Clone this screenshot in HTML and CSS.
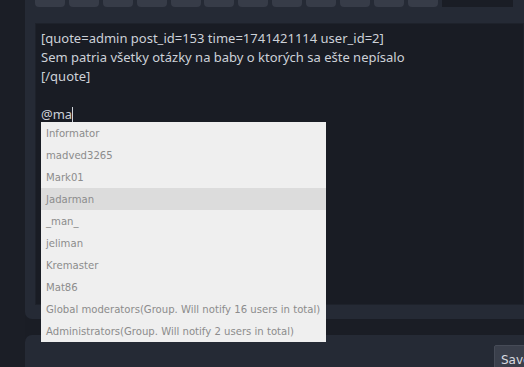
FILE: index.html
```html
<!DOCTYPE html>
<html lang="en">
<head>
    <meta charset="UTF-8">
    <meta name="viewport" content="width=device-width, initial-scale=1.0">
    <title>Post reply</title>
    <link rel="stylesheet" href="styles.css">
</head>
<body>
    <div class="page">
        <div class="sidebar"></div>
        <div class="main">
            <div class="editor-panel">
                <div class="toolbar">
                    <span class="tool-btn"></span>
                    <span class="tool-btn"></span>
                    <span class="tool-btn"></span>
                    <span class="tool-btn"></span>
                    <span class="tool-btn"></span>
                    <span class="tool-btn"></span>
                    <span class="tool-btn"></span>
                    <span class="tool-btn"></span>
                    <span class="tool-btn"></span>
                    <span class="tool-btn"></span>
                    <span class="tool-btn"></span>
                    <span class="tool-btn"></span>
                    <span class="tool-select"></span>
                </div>

                <div class="message-box">
                    <div class="message-text">
                        <div>[quote=admin post_id=153 time=1741421114 user_id=2]</div>
                        <div>Sem patria všetky otázky na baby o ktorých sa ešte nepísalo</div>
                        <div>[/quote]</div>
                        <div>&nbsp;</div>
                        <div>@ma<span class="caret"></span></div>
                    </div>

                    <!-- mention autocomplete -->
                    <ul class="mention-list">
                        <li>Informator</li>
                        <li>madved3265</li>
                        <li>Mark01</li>
                        <li class="selected">Jadarman</li>
                        <li>_man_</li>
                        <li>jeliman</li>
                        <li>Kremaster</li>
                        <li>Mat86</li>
                        <li>Global moderators(Group. Will notify 16 users in total)</li>
                        <li>Administrators(Group. Will notify 2 users in total)</li>
                    </ul>
                </div>
            </div>

            <div class="submit-panel">
                <button class="save-btn">Save</button>
            </div>
        </div>
    </div>
</body>
</html>
```

FILE: styles.css
```css
* {
    margin: 0;
    padding: 0;
    box-sizing: border-box;
}

html, body {
    height: 100%;
    overflow: hidden;
}

body {
    background: #1a1d25;
    font-family: 'Noto Sans', 'Open Sans', sans-serif;
}

.page {
    display: flex;
    height: 100%;
}

.sidebar {
    width: 25px;
    flex-shrink: 0;
    background: #1b1e26;
}

.main {
    flex: 1;
    display: flex;
    flex-direction: column;
    min-width: 0;
}

.editor-panel {
    flex-shrink: 0;
    background: #252a35;
    border-radius: 0 0 0 7px;
    padding: 0 0 14px 10px;
    height: 319px;
    display: flex;
    flex-direction: column;
}

.toolbar {
    display: flex;
    gap: 3.9px;
    height: 7px;
}

.tool-btn {
    width: 30px;
    background: #373c48;
    border-radius: 0 0 4px 4px;
}

.tool-select {
    width: 71px;
    margin-left: 0.1px;
    background: #1a1d25;
}

.message-box {
    position: relative;
    margin-top: 16px;
    flex: 1;
    background: #191c24;
    border: 1px solid #1e222b;
    padding: 5px 5px;
}

.message-text {
    color: #cdd1d8;
    font-size: 13px;
    line-height: 19px;
    white-space: nowrap;
}

.caret {
    display: inline-block;
    width: 1px;
    height: 15px;
    background: #cdd1d8;
    vertical-align: -3px;
}

.mention-list {
    position: absolute;
    left: 5px;
    top: 98px;
    width: 285px;
    list-style: none;
    background: #efefef;
    font-family: 'DejaVu Sans', Verdana, sans-serif;
    font-size: 10.1px;
    color: #8c8c8c;
}

.mention-list li {
    height: 22px;
    line-height: 20px;
    padding: 2px 0 0 5px;
    white-space: nowrap;
}

.mention-list li.selected {
    background: #dcdcdc;
}

.submit-panel {
    margin-top: 16px;
    flex: 1;
    background: #252a35;
    border-radius: 7px 0 0 0;
    display: flex;
    justify-content: flex-end;
    align-items: flex-start;
    padding-top: 10px;
    margin-right: -20px;
}

.save-btn {
    width: 50px;
    height: 26px;
    background: #3a3f4b;
    border: 1px solid #464b57;
    color: #d8dbe0;
    font-family: 'DejaVu Sans', Verdana, sans-serif;
    font-size: 12px;
    text-align: left;
    padding: 4px 0 0 6px;
    border-radius: 2px 0 0 0;
}
```
